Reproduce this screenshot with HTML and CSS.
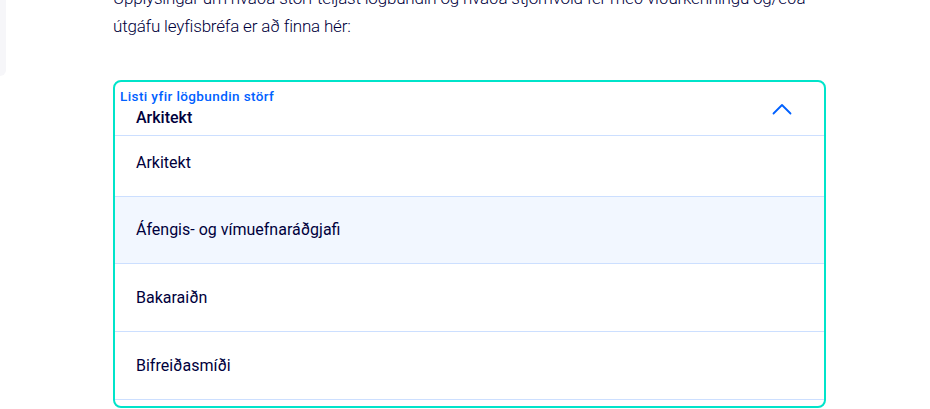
FILE: index.html
```html
<!DOCTYPE html>
<html lang="is">
<head>
<meta charset="utf-8">
<link rel="stylesheet" href="styles.css">
</head>
<body>
<div class="page">
  <aside class="side"></aside>
  <main class="content">
    <p class="intro">Upplýsingar um hvaða störf teljast lögbundin og hvaða stjórnvöld fer með viðurkenningu og/eða útgáfu leyfisbréfa er að finna hér:</p>
    <div class="select">
      <div class="control">
        <div class="control-text">
          <label class="label">Listi yfir lögbundin störf</label>
          <div class="value">Arkitekt</div>
        </div>
        <svg class="chevron" width="20" height="12" viewBox="0 0 20 12" aria-hidden="true"><path d="M1.5 10.5 L10 2 L18.5 10.5" fill="none" stroke="#0061ff" stroke-width="1.8" stroke-linecap="round" stroke-linejoin="round"/></svg>
      </div>
      <ul class="menu">
        <li class="option first">Arkitekt</li>
        <li class="option focused">Áfengis- og vímuefnaráðgjafi</li>
        <li class="option">Bakaraiðn</li>
        <li class="option">Bifreiðasmíði</li>
      </ul>
    </div>
  </main>
</div>
</body>
</html>
```
FILE: styles.css
```css
* { box-sizing: border-box; }
html, body { margin: 0; padding: 0; background: #fff; overflow: hidden; }
body { font-family: Roboto, "Noto Sans", sans-serif; color: #00003c; }
.page { display: grid; grid-template-columns: 6px 713px; column-gap: 107px; align-items: start; height: 409px; overflow: hidden; }
.side { height: 76px; background: #f6f6f9; border-bottom-right-radius: 8px; }
.content { margin-top: -16px; }
.intro { margin: 0 0 40px; font-size: 17px; letter-spacing: -0.2px; line-height: 28px; font-weight: 300; color: #00003c; }
.select { border: 2px solid #00e4ca; border-radius: 8px; height: 328px; overflow: hidden; background: #fff; }
.control { display: flex; align-items: center; justify-content: space-between; height: 54px; border-bottom: 1px solid #ccdfff; padding: 0 32px 0 5px; }
.control-text { display: flex; flex-direction: column; }
.label { font-size: 13.5px; letter-spacing: 0.4px; font-weight: 500; color: #0061ff; line-height: 16px; margin-top: 1px; }
.value { font-size: 16px; font-weight: 500; color: #00003c; line-height: 24px; padding-left: 16px; margin-top: 2px; }
.menu { list-style: none; margin: 0; padding: 0; }
.option { height: 68px; display: flex; align-items: center; padding-left: 21px; font-size: 16px; line-height: 24px; color: #00003c; border-bottom: 1px solid #ccdfff; }
.option.first { height: 61px; align-items: flex-end; padding-bottom: 21px; }
.option.focused { background: #f2f7ff; height: 67px; }
```
